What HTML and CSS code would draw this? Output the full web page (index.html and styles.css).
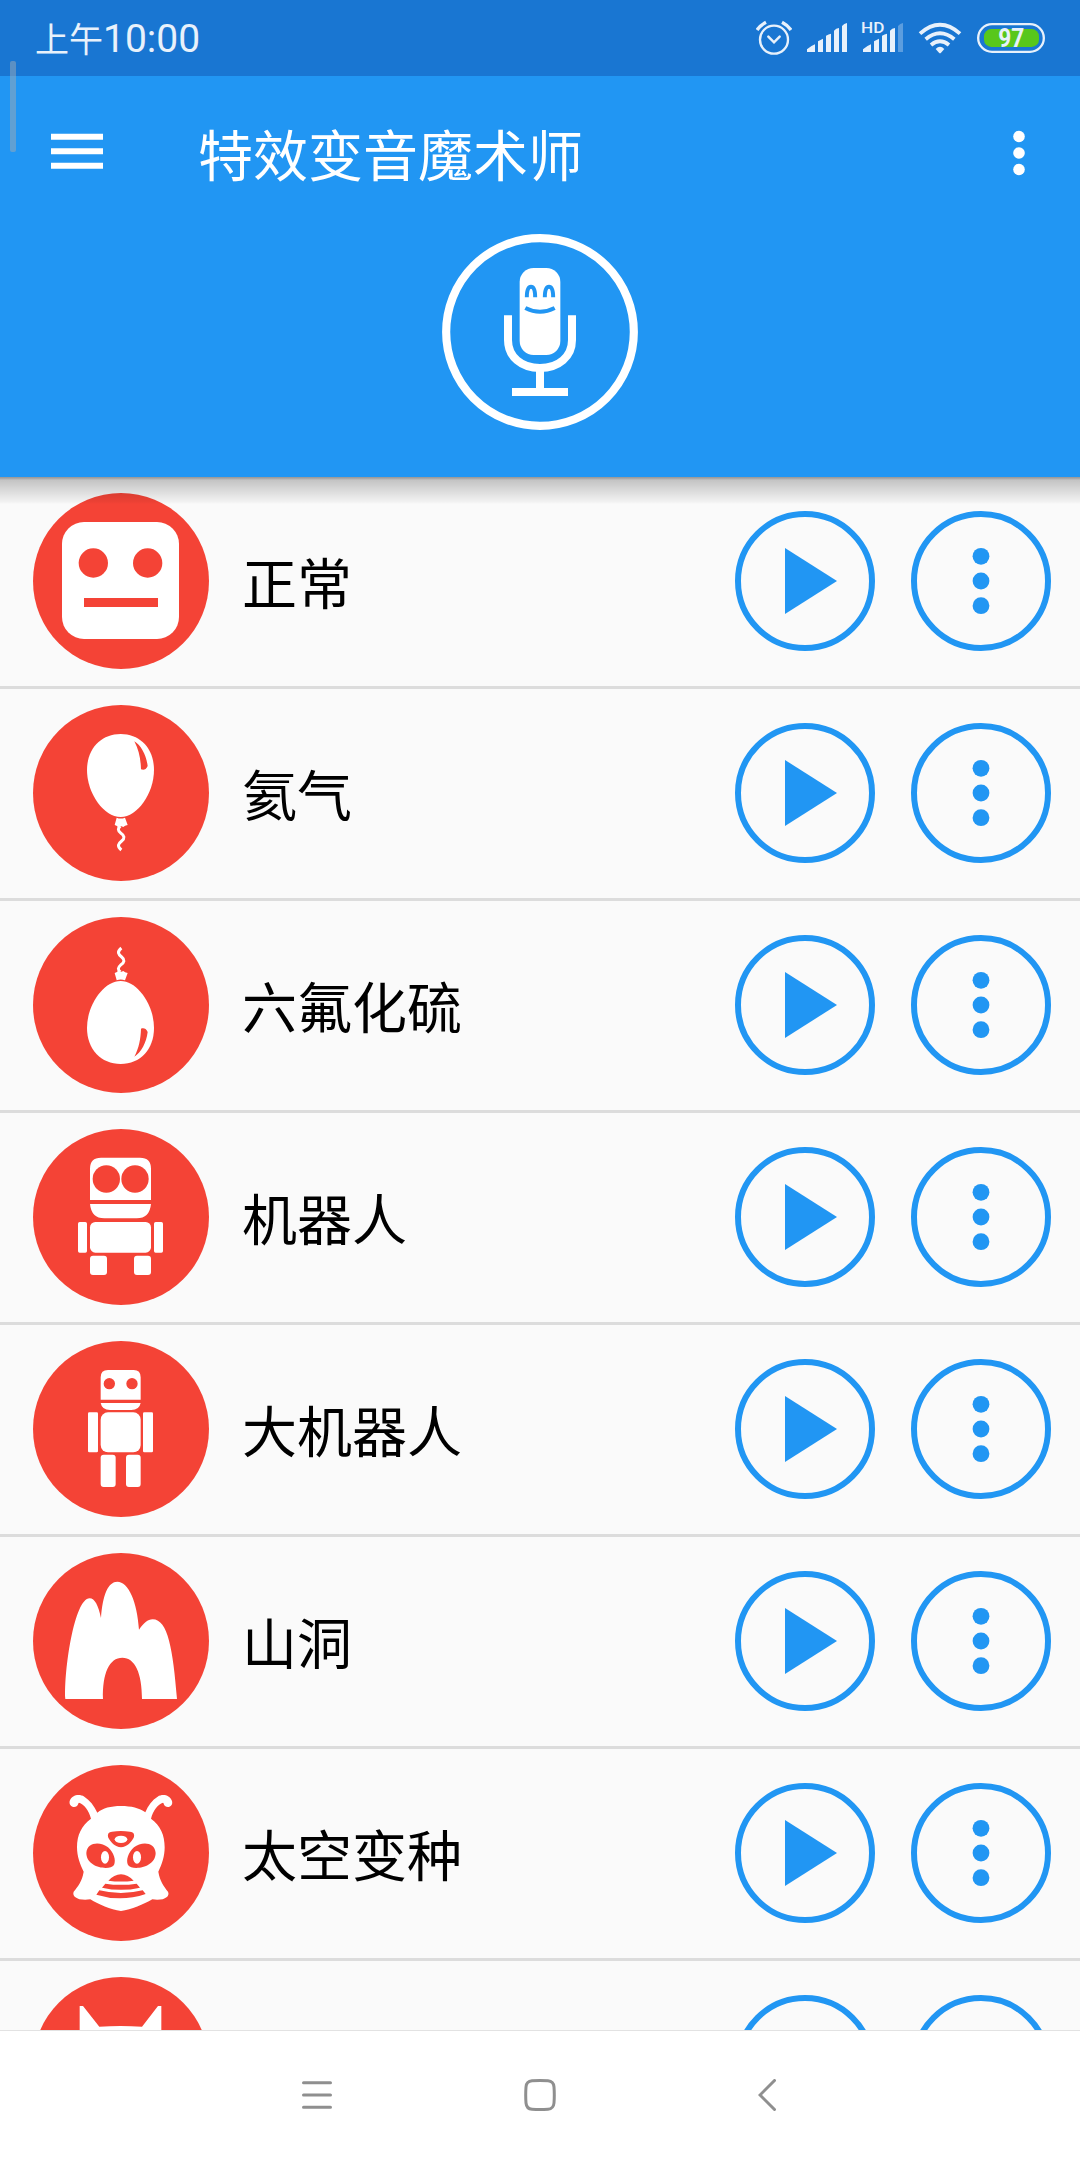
FILE: index.html
```html
<!DOCTYPE html>
<html lang="zh-CN">
<head>
<meta charset="utf-8">
<title>特效变音魔术师</title>
<link rel="stylesheet" href="styles.css">
</head>
<body>
<svg class="symbols" aria-hidden="true">
  <symbol id="play" viewBox="0 0 140 140">
    <circle cx="70" cy="70" r="67" fill="none" stroke="#2196f3" stroke-width="6"/>
    <path d="M50 37L102 70L50 103Z" fill="#2196f3"/>
  </symbol>
  <symbol id="more" viewBox="0 0 140 140">
    <circle cx="70" cy="70" r="67" fill="none" stroke="#2196f3" stroke-width="6"/>
    <g fill="#2196f3"><circle cx="70" cy="45.3" r="8.4"/><circle cx="70" cy="70" r="8.4"/><circle cx="70" cy="94.7" r="8.4"/></g>
  </symbol>
  <symbol id="balloon" viewBox="39 45 528 528">
    <path fill="#fff" d="M302 132C361 132 402 176 402 240C402 310 352 381 302 381C251 381 201 310 201 240C201 176 243 132 302 132Z"/>
    <path fill="#f44336" d="M343 154C364 167 379 196 383 228C378 239 371 241 363 238C362 207 357 181 343 154Z"/>
    <path fill="#fff" d="M290 383Q302 388 315 383L323 405Q314 407 310 411L302 408L294 411Q290 406 284 405Z"/>
    <path fill="none" stroke="#fff" stroke-width="9" d="M301 408C293 415 293 421 302 429C314 437 315 445 305 453C295 461 290 468 304 480"/>
  </symbol>
</svg>
<div class="screen">
  <div class="statusbar">
    <span class="clock">上午<span class="digits">10:00</span></span>
    <div class="indicators">
      <svg width="36" height="36" viewBox="48 60 108 108" fill="none" stroke="#e8f1fb"><circle cx="102" cy="119" r="42" stroke-width="7"/><path d="M85 110L102 127L119 110" stroke-width="7.500" stroke-linecap="round"/><path d="M51 90Q61 76 78 67M153 90Q143 76 126 67" stroke-width="10"/></svg>
      <svg width="42" height="36" viewBox="198 60 126 108" fill="#e8f1fb"><path d="M201 156V148Q212 138 225 133V156ZM234 156V124L249 116V156ZM258 156V107Q266 102 273 101V156ZM282 156V92Q288 85 297 84V156ZM306 156V78Q312 71 321 69V156Z"/></svg>
      <svg width="43" height="36" viewBox="363 60 129 108" fill="#e8f1fb"><text class="hd" x="363" y="99" textLength="70" lengthAdjust="spacingAndGlyphs">HD</text><path d="M369 156V148Q380 138 393 133V156ZM402 156V124L417 116V156ZM426 156V107Q434 102 441 101V156ZM450 156V92Q456 85 465 84V156Z"/><path d="M474 156V78Q480 71 489 69V156Z" opacity=".32"/></svg>
      <svg width="44" height="36" viewBox="534 60 132 108" fill="none" stroke="#e8f1fb" stroke-width="11.500"><path d="M540 101Q600 48 660 101M557 118Q600 82 643 118M573 135Q600 113 627 135"/><path d="M587 147Q600 134 613 147L603 158Q600 161 597 158Z" fill="#e8f1fb" stroke="none"/></svg>
      <svg width="70" height="36" viewBox="708 60 210 108"><rect x="714.500" y="72.500" width="197" height="83" rx="41.500" fill="none" stroke="#e8f1fb" stroke-width="7"/><rect x="732" y="87" width="165" height="54" rx="22" fill="#58c71b"/><text class="level" x="775" y="141" textLength="78" lengthAdjust="spacingAndGlyphs">97</text></svg>
    </div>
  </div>
  <header class="header">
    <div class="toolbar">
      <svg class="menu" width="52" height="36" viewBox="0 0 52 36" fill="#fff"><path d="M0 .7H52V6.700H0ZM0 15.200H52V21.200H0ZM0 29.700H52V35.700H0Z"/></svg>
      <h1 class="title">特效变音魔术师</h1>
      <svg width="12" height="46" viewBox="0 0 12 46" fill="#fff"><circle cx="6" cy="6.500" r="5.800"/><circle cx="6" cy="23" r="5.800"/><circle cx="6" cy="39.500" r="5.800"/></svg>
    </div>
    <svg class="mic" width="196" height="196" viewBox="66 72 588 588">
      <circle cx="360" cy="366" r="281.500" fill="none" stroke="#fff" stroke-width="24.500"/>
      <rect x="299" y="174" width="122" height="261" rx="42" fill="#fff"/>
      <path d="M320.500 262C320.500 240 325 230 333 230C341 230 345.500 240 345.500 262M374.500 262C374.500 240 379 230 387 230C395 230 399.500 240 399.500 262" fill="none" stroke="#2196f3" stroke-width="12"/>
      <path d="M316 294Q360 317 404 294" fill="none" stroke="#2196f3" stroke-width="12"/>
      <path d="M264 316V390C264 440 304 474 360 474C416 474 456 440 456 390V316M360 474V546M276 546H444" fill="none" stroke="#fff" stroke-width="24"/>
    </svg>
  </header>
  <main class="list">
    <div class="row">
      <svg class="badge" viewBox="99 99 528 528"><rect x="186" y="186" width="351" height="351" rx="66" fill="#fff"/><g fill="#f44336"><circle cx="280" cy="309" r="44"/><circle cx="443" cy="309" r="44"/><path d="M252 414H474V441H252Z"/></g></svg>
      <span class="name">正常</span>
      <svg class="action"><use href="#play"/></svg><svg class="action"><use href="#more"/></svg>
    </div>
    <div class="row">
      <svg class="badge"><use href="#balloon"/></svg>
      <span class="name">氦气</span>
      <svg class="action"><use href="#play"/></svg><svg class="action"><use href="#more"/></svg>
    </div>
    <div class="row">
      <svg class="badge flipped"><use href="#balloon"/></svg>
      <span class="name">六氟化硫</span>
      <svg class="action"><use href="#play"/></svg><svg class="action"><use href="#more"/></svg>
    </div>
    <div class="row">
      <svg class="badge" viewBox="39 42 528 528" fill="#fff"><path d="M210 255V161Q210 128 243 128H360Q393 128 393 161V255ZM210 267H393Q389 310 350 310H253Q214 310 210 267Z"/><g fill="#f44336"><circle cx="259" cy="192" r="41"/><circle cx="345" cy="192" r="41"/></g><rect x="210" y="321" width="183" height="92" rx="16"/><rect x="174" y="321" width="27" height="92" rx="5"/><rect x="402" y="321" width="27" height="92" rx="5"/><rect x="210" y="422" width="51" height="58" rx="9"/><rect x="342" y="422" width="51" height="58" rx="9"/></svg>
      <span class="name">机器人</span>
      <svg class="action"><use href="#play"/></svg><svg class="action"><use href="#more"/></svg>
    </div>
    <div class="row">
      <svg class="badge" viewBox="39 33 528 528" fill="#fff"><path d="M242 209V142Q242 120 264 120H341Q362 120 362 142V209ZM242 219H362Q358 240 334 240H270Q246 240 242 219Z"/><g fill="#f44336"><circle cx="268" cy="161" r="17"/><circle cx="336" cy="161" r="17"/></g><rect x="242" y="247" width="120" height="120" rx="22"/><rect x="204" y="247" width="30" height="120" rx="4"/><rect x="369" y="247" width="30" height="120" rx="4"/><rect x="242" y="374" width="45" height="97" rx="9"/><rect x="318" y="374" width="44" height="97" rx="9"/></svg>
      <span class="name">大机器人</span>
      <svg class="action"><use href="#play"/></svg><svg class="action"><use href="#more"/></svg>
    </div>
    <div class="row">
      <svg class="badge" viewBox="39 39 528 528" fill="#fff"><path d="M136 477C132 390 163 175 209 175C224 175 235 196 243 234C248 165 264 125 292 125C325 125 352 185 357 269C371 249 383 238 398 238C444 238 459 330 471 477H366C366 400 345 353 307 353C268 353 247 400 249 477Z"/></svg>
      <span class="name">山洞</span>
      <svg class="action"><use href="#play"/></svg><svg class="action"><use href="#more"/></svg>
    </div>
    <div class="row">
      <svg class="badge" viewBox="39 45 528 528" fill="#fff">
        <path d="M303 168C334 168 358 174 376 187C384 166 397 150 413 140C428 131 449 135 456 153C460 167 446 176 435 168C431 164 432 160 429 158C414 162 399 181 393 206C422 228 434 255 434 292C434 319 426 343 415 365C420 394 431 408 444 425C451 440 432 453 397 448C370 463 335 479 303 483C271 479 236 463 211 448C174 453 155 440 161 425C175 408 186 394 191 365C180 343 171 319 171 292C171 255 184 228 213 206C207 181 192 162 177 158C174 160 175 164 171 168C160 176 146 167 149 153C156 135 177 131 193 140C209 150 222 166 232 188C249 174 272 168 303 168Z"/>
        <g fill="#f44336"><path d="M276 245Q302 241 330 245Q345 246 342 261C336 275 320 292 303 292C286 292 270 275 264 261Q261 246 276 245Z"/><path d="M199 309C201 275 242 274 264 292C281 308 289 330 282 345C270 363 199 354 199 309ZM407 309C405 275 364 274 342 292C325 308 317 330 324 345C336 363 407 354 407 309Z"/><path d="M265 392C287 366 319 366 341 392Q303 397 265 392ZM256 401Q303 408 350 401L360 413Q303 426 246 413ZM238 421Q303 437 368 421L377 432Q303 457 229 434Z"/></g>
        <ellipse cx="303" cy="268" rx="19" ry="11"/><ellipse cx="255" cy="322" rx="12" ry="19"/><ellipse cx="351" cy="322" rx="12" ry="19"/>
      </svg>
      <span class="name">太空变种</span>
      <svg class="action"><use href="#play"/></svg><svg class="action"><use href="#more"/></svg>
    </div>
    <div class="row">
      <svg class="badge" viewBox="39 681 528 528" fill="#fff"><path d="M179 768H189L238 830Q302 826 366 830L414 768H424V960Q302 1120 179 960Z"/></svg>
      <span class="name"></span>
      <svg class="action"><use href="#play"/></svg><svg class="action"><use href="#more"/></svg>
    </div>
  </main>
  <nav class="navbar">
    <svg width="30" height="30" viewBox="0 0 30 30"><path d="M1.500 2.700H28.500M1.500 15H28.500M1.500 27.300H28.500"/></svg>
    <svg width="32" height="32" viewBox="0 0 32 32"><path d="M8 1.800Q16 1.300 24 1.800Q29.500 2.200 30 8Q30.600 16 30 24Q29.500 29.800 24 30.200Q16 30.700 8 30.200Q2.500 29.800 2 24Q1.400 16 2 8Q2.500 2.200 8 1.800Z"/></svg>
    <svg width="18" height="32" viewBox="0 0 18 32"><path d="M16.500 1.500L2 16L16.500 30.500"/></svg>
  </nav>
  <div class="edge-handle"></div>
</div>
</body>
</html>
```

FILE: styles.css
```css
* { box-sizing: border-box; }

body {
  margin: 0;
  background: #fafafa;
  font-family: "Noto Sans CJK SC", sans-serif;
}

svg { display: block; flex: none; }

.symbols { position: absolute; width: 0; height: 0; }

.screen {
  position: relative;
  display: flex;
  flex-direction: column;
  width: 1080px;
  height: 2160px;
  overflow: hidden;
}

.statusbar {
  flex: none;
  display: flex;
  justify-content: space-between;
  height: 76px;
  padding: 20px 34px 0 35px;
  background: #1976d2;
  color: #e8f1fb;
}

.clock {
  font-size: 34px;
  line-height: 36px;
}

.digits {
  font-family: Roboto, sans-serif;
  font-size: 39px;
}

.indicators { display: flex; gap: 14px; }
.indicators svg:nth-child(3) { margin-left: -1px; }

.hd { font: 500 46px Roboto, sans-serif; }
.level { font: 700 76px Roboto, sans-serif; fill: #e8f1fb; }

.header {
  position: relative;
  z-index: 1;
  flex: none;
  height: 401px;
  background: #2196f3;
}

.header::after {
  content: "";
  position: absolute;
  top: 100%;
  left: 0;
  right: 0;
  height: 27px;
  background: linear-gradient(rgba(0,0,0,.4) 0, rgba(0,0,0,.3) 2px, rgba(0,0,0,.22) 3px, rgba(0,0,0,.15) 11px, rgba(0,0,0,.03) 25px, transparent);
}

.toolbar {
  display: flex;
  align-items: center;
  height: 154px;
  padding: 0 55px 0 51px;
}

.title {
  flex: 1;
  margin: -2px 0 0 95px;
  color: #fff;
  font-size: 55px;
  font-weight: 400;
  line-height: 80px;
}

.menu { position: relative; top: -2px; }

.mic { margin: 4px auto 0; }

.list { flex: 1; min-height: 0; overflow: hidden; }

.row {
  display: flex;
  align-items: center;
  gap: 36px;
  height: 212px;
  padding: 0 29px 1px 33px;
  border-bottom: 3px solid #dcdcdc;
}

.badge {
  width: 176px;
  height: 176px;
  border-radius: 50%;
  background: #f44336;
}

.flipped { transform: scaleY(-1); }

.name {
  flex: 1;
  margin: -3px 0 0 -3px;
  color: #000;
  font-size: 55px;
  line-height: 80px;
}

.action { width: 140px; height: 140px; }

.navbar {
  flex: none;
  display: flex;
  align-items: center;
  height: 130px;
  padding: 0 0 1px 302px;
  border-top: 1px solid #e2e2e2;
  background: #fff;
}

.navbar svg { fill: none; stroke: #8f8f8f; stroke-width: 3; stroke-linecap: round; }
.navbar svg:nth-child(2) { margin-left: 192px; }
.navbar svg:nth-child(3) { margin-left: 202px; }

.edge-handle {
  position: absolute;
  z-index: 2;
  left: 10px;
  top: 61px;
  width: 5.5px;
  height: 91px;
  border-radius: 2px;
  background: rgba(160, 170, 180, .5);
}
```
